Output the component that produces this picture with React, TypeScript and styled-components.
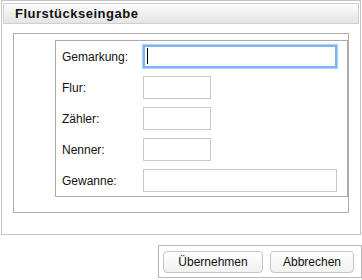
import React from 'react';
import styled, { createGlobalStyle } from 'styled-components';

const GlobalStyle = createGlobalStyle`
  html, body {
    margin: 0;
    padding: 0;
    background: #fff;
  }
  body {
    font-family: "Liberation Sans", Arial, sans-serif;
    font-size: 12px;
    color: #111;
  }
`;

type Field = {
  label: string;
  wide: boolean;
  focused?: boolean;
};

const fields: Field[] = [
  { label: 'Gemarkung:', wide: true, focused: true },
  { label: 'Flur:', wide: false },
  { label: 'Zähler:', wide: false },
  { label: 'Nenner:', wide: false },
  { label: 'Gewanne:', wide: true },
];

const App = () => {
  return (
    <Page>
      <GlobalStyle />
      <Panel>
        <Header>Flurstückseingabe</Header>
        <Fieldset>
          <Form>
            {fields.map((f) => (
              <Row key={f.label}>
                <Label>{f.label}</Label>
                <InputWrap>
                  <TextInput wide={f.wide} focused={!!f.focused} readOnly />
                  {f.focused && <Caret />}
                </InputWrap>
              </Row>
            ))}
          </Form>
        </Fieldset>
      </Panel>
      <ButtonBar>
        <Button width={100}>Übernehmen</Button>
        <Button width={84}>Abbrechen</Button>
      </ButtonBar>
    </Page>
  );
};

const Page = styled.div`
  width: 362px;
  height: 280px;
  display: flex;
  flex-direction: column;
  box-sizing: border-box;
`;

const Panel = styled.div`
  margin-left: 1px;
  width: 360px;
  height: 235px;
  border: 1px solid #c4c4c4;
  box-sizing: border-box;
  display: flex;
  flex-direction: column;
`;

const Header = styled.div`
  margin: 2px 1px 0 1px;
  height: 21px;
  box-sizing: border-box;
  border: 1px solid #cfcfcf;
  background: linear-gradient(#fbfbfb, #e4e4e4);
  padding-left: 11px;
  display: flex;
  align-items: center;
  font-weight: bold;
  font-size: 13px;
  letter-spacing: 0.5px;
  color: #111;
`;

const Fieldset = styled.div`
  margin: 9px 0 0 11px;
  width: 336px;
  height: 180px;
  box-sizing: border-box;
  border: 1px solid #ababab;
  display: flex;
  flex-direction: column;
  align-items: flex-end;
`;

const Form = styled.div`
  margin-top: 6px;
  width: 293px;
  box-sizing: border-box;
  border: 1px solid #ababab;
  padding: 4px 0 4px 6px;
  display: flex;
  flex-direction: column;
  gap: 8px;
`;

const Row = styled.div`
  display: flex;
  align-items: center;
  height: 23px;
`;

const Label = styled.div`
  width: 81px;
  color: #111;
`;

const InputWrap = styled.div`
  position: relative;
  display: flex;
`;

const TextInput = styled.input<{ wide: boolean; focused: boolean }>`
  width: ${(p) => (p.wide ? 194 : 68)}px;
  height: 23px;
  box-sizing: border-box;
  margin: 0;
  padding: 0 4px;
  outline: none;
  background: #fff;
  font: inherit;
  border: ${(p) => (p.focused ? '2px solid #7fb3f0' : '1px solid #c9c9c9')};
  box-shadow: ${(p) => (p.focused ? '0 0 1px 1px #b4d3f8' : 'none')};
`;

const Caret = styled.span`
  position: absolute;
  left: 4px;
  top: 3px;
  width: 1px;
  height: 16px;
  background: #000;
`;

const ButtonBar = styled.div`
  align-self: flex-end;
  margin-top: 10px;
  width: 204px;
  height: 33px;
  box-sizing: border-box;
  border: 1px solid #b8b8b8;
  padding: 0 6px 0 4px;
  display: flex;
  align-items: center;
  gap: 7px;
`;

const Button = styled.div<{ width: number }>`
  width: ${(p) => p.width}px;
  height: 22px;
  box-sizing: border-box;
  border: 1px solid #c6c6c6;
  border-radius: 4px;
  background: linear-gradient(#ffffff, #f1f1f1);
  display: flex;
  align-items: center;
  justify-content: center;
  color: #111;
  font-size: 12px;
`;

export default App;
